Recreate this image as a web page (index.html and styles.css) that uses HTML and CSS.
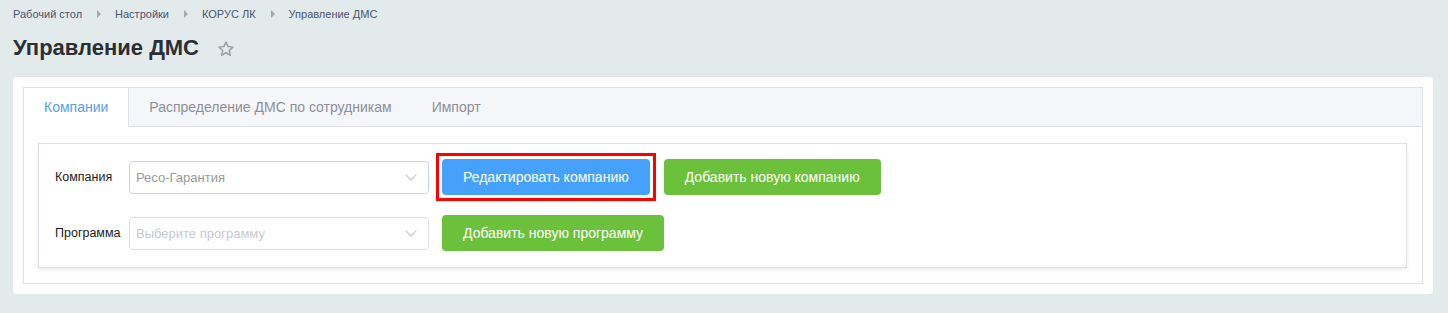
FILE: index.html
```html
<!DOCTYPE html>
<html lang="ru">
<head>
    <meta charset="UTF-8">
    <meta name="viewport" content="width=device-width, initial-scale=1.0">
    <title>Управление ДМС</title>
    <link rel="stylesheet" href="styles.css">
</head>
<body>
    <div class="breadcrumbs">
        <a href="#">Рабочий стол</a>
        <span class="crumb-arrow"></span>
        <a href="#">Настройки</a>
        <span class="crumb-arrow"></span>
        <a href="#">КОРУС ЛК</a>
        <span class="crumb-arrow"></span>
        <a href="#">Управление ДМС</a>
    </div>

    <div class="title-row">
        <h1>Управление ДМС</h1>
        <svg class="star" width="18" height="18" viewBox="0 0 24 24">
            <path d="M12 2.8l2.8 6 6.5.7-4.9 4.4 1.4 6.4L12 17l-5.8 3.3 1.4-6.4-4.9-4.4 6.5-.7z" fill="none" stroke="#9ba1a9" stroke-width="2" stroke-linejoin="round"/>
        </svg>
    </div>

    <div class="card">
        <div class="tabs">
            <div class="tab-header">
                <div class="tab active">Компании</div>
                <div class="tab">Распределение ДМС по сотрудникам</div>
                <div class="tab">Импорт</div>
            </div>
            <div class="tab-body">
                <div class="panel">
                    <div class="form-row">
                        <label class="field-label">Компания</label>
                        <div class="select focused">
                            <span class="select-value">Ресо-Гарантия</span>
                            <span class="chevron"></span>
                        </div>
                        <div class="highlight">
                            <button class="btn btn-blue">Редактировать компанию</button>
                        </div>
                        <button class="btn btn-green">Добавить новую компанию</button>
                    </div>
                    <div class="form-row second">
                        <label class="field-label">Программа</label>
                        <div class="select">
                            <span class="select-placeholder">Выберите программу</span>
                            <span class="chevron"></span>
                        </div>
                        <button class="btn btn-green">Добавить новую программу</button>
                    </div>
                </div>
            </div>
        </div>
    </div>
</body>
</html>
```

FILE: styles.css
```css
body {
    font-family: "Liberation Sans", Arial, sans-serif;
    margin: 0;
    padding: 0;
    background: #e3eaec;
    color: #333;
}

.breadcrumbs {
    display: flex;
    align-items: center;
    padding: 7px 13px 0 13px;
    height: 14px;
    font-size: 11px;
}

.breadcrumbs a {
    color: #4a5571;
    text-decoration: none;
}

.crumb-arrow {
    width: 0;
    height: 0;
    margin: 0 14px 0 15px;
    border-top: 4px solid transparent;
    border-bottom: 4px solid transparent;
    border-left: 4px solid #a2a8ae;
}

.title-row {
    display: flex;
    align-items: center;
    padding: 12px 13px 0 13px;
    height: 30px;
}

.title-row h1 {
    margin: 0;
    font-size: 22px;
    font-weight: bold;
    color: #2b2f33;
}

.star {
    margin-left: 18px;
    margin-top: 2px;
}

.card {
    margin: 14px 15px 0 13px;
    padding: 10px;
    background: white;
    border-radius: 4px;
}

.tabs {
    border: 1px solid #dfe1e7;
}

.tab-header {
    display: flex;
    height: 38px;
    background: #f5f6fa;
    border-bottom: 1px solid #dfe1e7;
}

.tab {
    padding: 0 20px;
    line-height: 38px;
    font-size: 14px;
    color: #8c9096;
}

.tab.active {
    background: white;
    color: #5a9de9;
    border-right: 1px solid #dfe1e7;
    height: 39px;
}

.tab-body {
    padding: 16px 15px 15px 14px;
}

.panel {
    border: 1px solid #dcdfe6;
    box-shadow: 0 2px 4px rgba(0, 0, 0, 0.08);
    padding: 9px 16px 16px 16px;
}

.form-row {
    display: flex;
    align-items: center;
    height: 48px;
}

.form-row.second {
    margin-top: 14px;
    height: 36px;
}

.field-label {
    width: 74px;
    font-size: 12.5px;
    color: #1c1c1c;
    white-space: nowrap;
}

.select {
    display: flex;
    align-items: center;
    justify-content: space-between;
    box-sizing: border-box;
    width: 300px;
    height: 33px;
    padding: 0 13px 0 6px;
    border: 1px solid #dcdfe6;
    border-radius: 4px;
    font-size: 13px;
}

.select.focused {
    border-color: #b9d6f7;
}

.select-value {
    color: #9a9a9a;
}

.select-placeholder {
    color: #c6c9cf;
}

.chevron {
    width: 7px;
    height: 7px;
    margin-top: -5px;
    border-right: 1px solid #c0c4cc;
    border-bottom: 1px solid #c0c4cc;
    transform: rotate(45deg);
}

.highlight {
    margin-left: 7px;
    padding: 3px;
    border: 3px solid #ff0000;
}

.btn {
    height: 36px;
    padding: 0 21px;
    border: none;
    border-radius: 4px;
    color: white;
    font-family: "Liberation Sans", Arial, sans-serif;
    font-size: 14px;
    cursor: pointer;
}

.btn-blue {
    background: #45a1fb;
}

.btn-green {
    background: #6cc13c;
    margin-left: 8px;
}

.form-row.second .btn-green {
    margin-left: 13px;
}
```
